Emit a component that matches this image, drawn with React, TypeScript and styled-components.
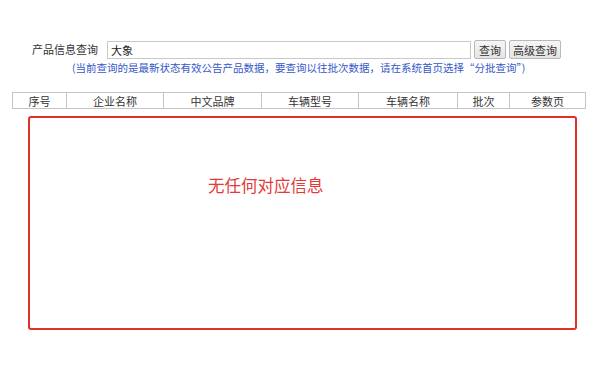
import styled, { createGlobalStyle } from 'styled-components';

const GlobalStyle = createGlobalStyle`
  html, body {
    margin: 0;
    padding: 0;
    background: #ffffff;
  }
  body {
    font-family: "Noto Sans CJK SC", "Noto Sans", sans-serif;
    font-size: 11px;
    color: #333;
  }
`;

const Page = styled.div`
  width: 600px;
  height: 369px;
  padding-top: 40px;
  box-sizing: border-box;
  overflow: hidden;
`;

const SearchRow = styled.div`
  display: flex;
  align-items: center;
  height: 19px;
  margin-left: 32px;
`;

const Label = styled.span`
  font-size: 11px;
  color: #333;
  margin-right: 9px;
  line-height: 19px;
`;

const SearchInput = styled.input`
  width: 364px;
  height: 18px;
  box-sizing: border-box;
  border: 1px solid #c8c8c8;
  padding: 0 3px;
  font-family: inherit;
  font-size: 11px;
  color: #222;
  outline: none;
`;

const Button = styled.button<{ $w: number }>`
  width: ${(p) => p.$w}px;
  height: 19px;
  margin-left: 3px;
  padding: 0;
  box-sizing: border-box;
  border: 1px solid #b8b8b8;
  border-radius: 2px;
  background: linear-gradient(#f6f6f6, #e4e4e4);
  font-family: inherit;
  font-size: 11px;
  color: #333;
`;

const Note = styled.div`
  margin: 2px 0 0 72px;
  font-size: 10.5px;
  line-height: 14px;
  color: #3558c8;
  white-space: nowrap;
`;

const Table = styled.table`
  margin: 17px 0 0 12px;
  width: 573px;
  border-collapse: collapse;
  table-layout: fixed;
`;

const Th = styled.th<{ $w: number }>`
  width: ${(p) => p.$w}px;
  height: 15px;
  padding: 0;
  border: 1px solid #c4c4c4;
  font-weight: normal;
  font-size: 11px;
  color: #333;
  text-align: center;
  line-height: 14px;
`;

const EmptyBox = styled.div`
  margin: 7px 0 0 28px;
  width: 549px;
  height: 214px;
  box-sizing: border-box;
  border: 2px solid #e0302a;
  border-radius: 3px;
  padding: 57px 0 0 178px;
`;

const EmptyText = styled.div`
  font-size: 16.5px;
  color: #e23a36;
  line-height: 20px;
`;

const columns = [
  { name: '序号', w: 53 },
  { name: '企业名称', w: 96 },
  { name: '中文品牌', w: 97 },
  { name: '车辆型号', w: 96 },
  { name: '车辆名称', w: 98 },
  { name: '批次', w: 51 },
  { name: '参数页', w: 75 },
];

export default function App() {
  return (
    <>
      <GlobalStyle />
      <Page>
        <SearchRow>
          <Label>产品信息查询</Label>
          <SearchInput defaultValue="大象" />
          <Button $w={32}>查询</Button>
          <Button $w={52}>高级查询</Button>
        </SearchRow>
        <Note>(当前查询的是最新状态有效公告产品数据，要查询以往批次数据，请在系统首页选择“分批查询”)</Note>
        <Table>
          <thead>
            <tr>
              {columns.map((c) => (
                <Th key={c.name} $w={c.w}>
                  {c.name}
                </Th>
              ))}
            </tr>
          </thead>
        </Table>
        <EmptyBox>
          <EmptyText>无任何对应信息</EmptyText>
        </EmptyBox>
      </Page>
    </>
  );
}
